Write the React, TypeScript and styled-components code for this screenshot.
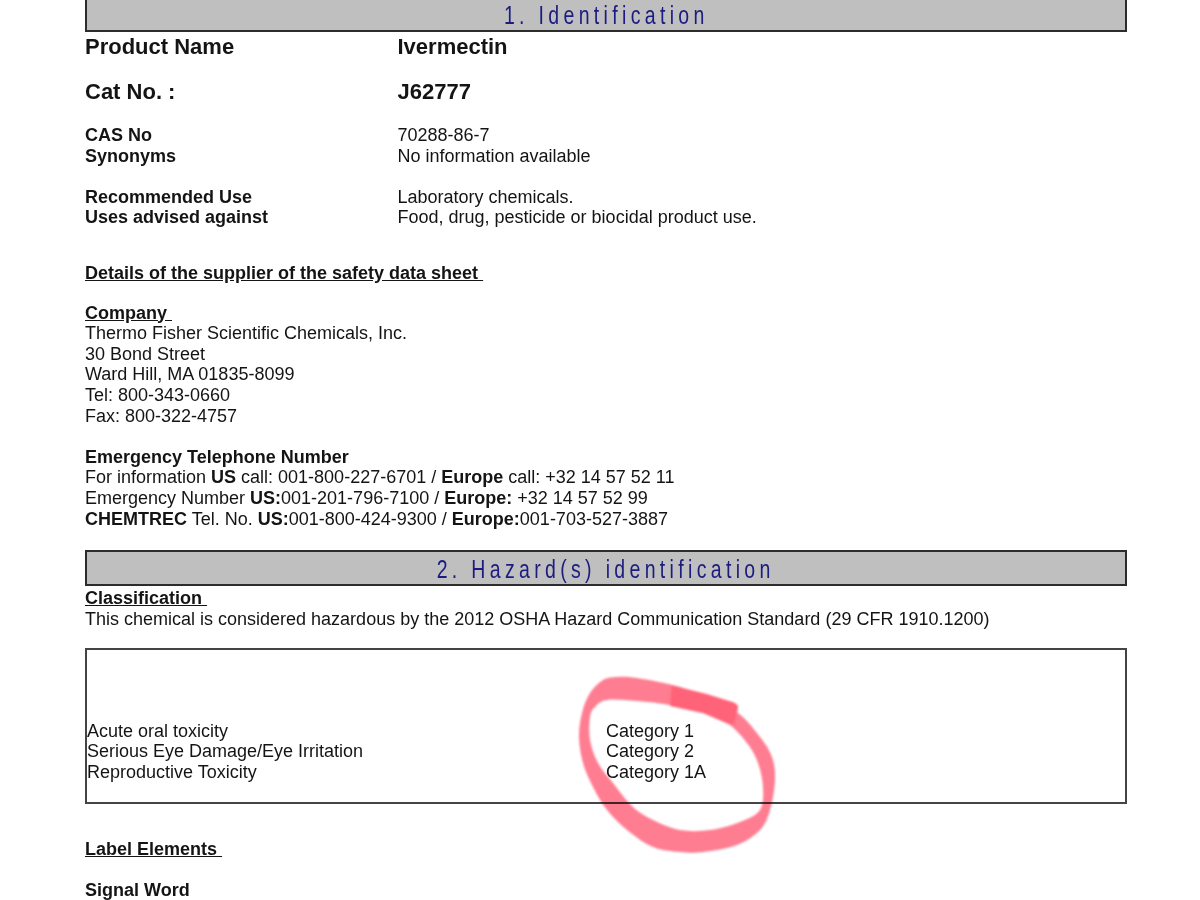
import { Fragment } from "react";
import styled, { createGlobalStyle } from "styled-components";

const Global = createGlobalStyle`
  html, body {
    margin: 0;
    padding: 0;
    background: #fff;
    overflow: hidden;
  }
`;

const Page = styled.div`
  position: relative;
  width: 1200px;
  height: 900px;
  overflow: hidden;
  box-sizing: border-box;
  padding: 0 73px 0 85px;
  font-family: "Liberation Sans", Arial, sans-serif;
  font-size: 18px;
  line-height: 20.6px;
  color: #141414;
`;

const Sheet = styled.div`
  margin-top: -4px;
  display: flex;
  flex-direction: column;
`;

const SectionBar = styled.div<{ $before?: number }>`
  box-sizing: border-box;
  height: 36px;
  border: 2px solid #2c2c2c;
  background: #bfbfbf;
  display: flex;
  align-items: center;
  justify-content: center;
  padding-top: 3px;
  margin-top: ${(p) => p.$before ?? 0}px;
  margin-bottom: 2px;
`;

const SectionTitle = styled.span`
  display: inline-block;
  white-space: pre;
  font-size: 25px;
  letter-spacing: 5.55px;
  color: #1c1c80;
  transform: scaleX(0.78);
`;

const Row = styled.div<{ $big?: boolean; $after?: number }>`
  display: grid;
  grid-template-columns: 312.5px 1fr;
  font-size: ${(p) => (p.$big ? "22px" : "18px")};
  line-height: ${(p) => (p.$big ? "26px" : "20.6px")};
  margin-bottom: ${(p) => p.$after ?? 0}px;
`;

const Label = styled.div`
  font-weight: 700;
`;

const Value = styled.div<{ $bold?: boolean }>`
  font-weight: ${(p) => (p.$bold ? 700 : 400)};
`;

const Heading = styled.div<{ $before?: number; $plain?: boolean }>`
  font-weight: 700;
  margin-top: ${(p) => p.$before ?? 0}px;
  text-decoration: ${(p) => (p.$plain ? "none" : "underline")};
  white-space: pre;
`;

const Line = styled.div`
  white-space: pre;
`;

const HazardBox = styled.div`
  box-sizing: border-box;
  height: 156px;
  margin-top: 19px;
  border: 2px solid #444;
  padding-bottom: 20px;
  display: grid;
  grid-template-columns: 519px 1fr;
  align-content: end;
`;

const InkMark = styled.svg`
  position: absolute;
  left: 560px;
  top: 660px;
  width: 240px;
  height: 200px;
  mix-blend-mode: multiply;
  pointer-events: none;
  overflow: visible;
`;

const hazards = [
  ["Acute oral toxicity", "Category 1"],
  ["Serious Eye Damage/Eye Irritation", "Category 2"],
  ["Reproductive Toxicity", "Category 1A"],
];

type Pt = [number, number];

// outline of the pen stroke, in 3x coordinates of the 240x200 mark
const outer: Pt[] = [
  [360, 81], [231, 54], [171, 51], [129, 60], [90, 99], [66, 159], [57, 231], [69, 309],
  [99, 381], [141, 450], [201, 510], [279, 561], [360, 576], [429, 576], [531, 555],
  [600, 510], [630, 450], [645, 360], [636, 291], [600, 231], [534, 159], [450, 120],
];
const inner: Pt[] = [
  [231, 123], [141, 120], [105, 141], [90, 171], [90, 240], [114, 309], [159, 369], [219, 441],
  [279, 480], [360, 510], [450, 510], [540, 486], [600, 450], [609, 381], [594, 309],
  [561, 249], [501, 189], [420, 156], [330, 135],
];

function smoothLoop(points: Pt[]) {
  const n = points.length;
  let d = `M${points[0][0]} ${points[0][1]}`;
  for (let i = 0; i < n; i++) {
    const p0 = points[(i - 1 + n) % n];
    const p1 = points[i];
    const p2 = points[(i + 1) % n];
    const p3 = points[(i + 2) % n];
    const c1x = p1[0] + (p2[0] - p0[0]) / 6;
    const c1y = p1[1] + (p2[1] - p0[1]) / 6;
    const c2x = p2[0] - (p3[0] - p1[0]) / 6;
    const c2y = p2[1] - (p3[1] - p1[1]) / 6;
    d += ` C${c1x} ${c1y} ${c2x} ${c2y} ${p2[0]} ${p2[1]}`;
  }
  return d + " Z";
}

export default function App() {
  return (
    <Page>
      <Global />
      <Sheet>
        <SectionBar>
          <SectionTitle>1. Identification</SectionTitle>
        </SectionBar>
        <Row $big $after={19}>
          <Label>Product Name</Label>
          <Value $bold>Ivermectin</Value>
        </Row>
        <Row $big $after={20}>
          <Label>Cat No. :</Label>
          <Value $bold>J62777</Value>
        </Row>
        <Row>
          <Label>CAS No</Label>
          <Value>70288-86-7</Value>
        </Row>
        <Row $after={20.6}>
          <Label>Synonyms</Label>
          <Value>No information available</Value>
        </Row>
        <Row>
          <Label>Recommended Use</Label>
          <Value>Laboratory chemicals.</Value>
        </Row>
        <Row>
          <Label>Uses advised against</Label>
          <Value>Food, drug, pesticide or biocidal product use.</Value>
        </Row>

        <Heading $before={35}>{"Details of the supplier of the safety data sheet "}</Heading>

        <Heading $before={19}>{"Company "}</Heading>
        <Line>Thermo Fisher Scientific Chemicals, Inc.</Line>
        <Line>30 Bond Street</Line>
        <Line>Ward Hill, MA 01835-8099</Line>
        <Line>Tel: 800-343-0660</Line>
        <Line>Fax: 800-322-4757</Line>

        <Heading $before={20.6} $plain>Emergency Telephone Number</Heading>
        <Line>
          For information <b>US</b> call: 001-800-227-6701 / <b>Europe</b> call: +32 14 57 52 11
        </Line>
        <Line>
          Emergency Number <b>US:</b>001-201-796-7100 / <b>Europe:</b> +32 14 57 52 99
        </Line>
        <Line>
          <b>CHEMTREC</b> Tel. No. <b>US:</b>001-800-424-9300 / <b>Europe:</b>001-703-527-3887
        </Line>

        <SectionBar $before={21}>
          <SectionTitle>2. Hazard(s) identification</SectionTitle>
        </SectionBar>
        <Heading>{"Classification "}</Heading>
        <Line>
          This chemical is considered hazardous by the 2012 OSHA Hazard Communication Standard (29 CFR 1910.1200)
        </Line>

        <HazardBox>
          {hazards.map(([name, category]) => (
            <Fragment key={name}>
              <Value>{name}</Value>
              <Value>{category}</Value>
            </Fragment>
          ))}
        </HazardBox>

        <Heading $before={35}>{"Label Elements "}</Heading>
        <Heading $before={20.6} $plain>Signal Word</Heading>
      </Sheet>

      <InkMark viewBox="0 0 720 600">
        <defs>
          <filter id="soft" x="-10%" y="-10%" width="120%" height="120%">
            <feGaussianBlur stdDeviation="3" />
          </filter>
        </defs>
        <g filter="url(#soft)">
          <path d={`${smoothLoop(outer)} ${smoothLoop(inner)}`} fill="#ff7d91" fillRule="evenodd" />
          <path
            d="M335 76 L 440 102 L 520 127 Q 536 133 534 146 L 524 184 Q 518 198 504 191 L 430 160 L 330 138 Z"
            fill="#ff6479"
          />
        </g>
      </InkMark>
    </Page>
  );
}
